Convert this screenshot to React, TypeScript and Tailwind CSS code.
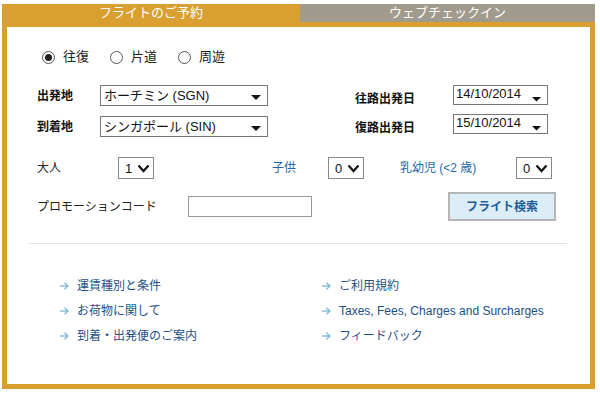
import React from 'react';

const font = { fontFamily: '"Liberation Sans", "Noto Sans CJK JP", sans-serif' };

function Radio({ checked, label }: { checked?: boolean; label: string }) {
  return (
    <label className="flex items-center gap-[8px]">
      <span className="w-[13px] h-[13px] rounded-full border border-[#555] bg-white flex items-center justify-center">
        {checked && <span className="w-[7px] h-[7px] rounded-full bg-[#222]" />}
      </span>
      <span className="text-[13px] text-[#222]">{label}</span>
    </label>
  );
}

function Triangle({ small }: { small?: boolean }) {
  return (
    <svg width={small ? 9 : 10} height="5" viewBox={small ? '0 0 9 5' : '0 0 10 5'} className="mt-[4px]">
      <polygon points={small ? '0,0 9,0 4.5,4.5' : '0,0 10,0 5,5'} fill="#111" />
    </svg>
  );
}

function Dropdown({ value, width }: { value: string; width: string }) {
  return (
    <div className={`${width} h-[21px] border border-[#777] bg-white flex items-center justify-between pl-[3px] pr-[6px]`}>
      <span className="text-[13px] text-[#111] leading-none">{value}</span>
      <Triangle />
    </div>
  );
}

function DateSelect({ value }: { value: string }) {
  return (
    <div className="w-[95px] h-[20px] border border-[#777] bg-white flex justify-between pl-[2px] pr-[6px]">
      <span className="text-[13px] text-[#111] leading-[16px]">{value}</span>
      <svg width="9" height="5" viewBox="0 0 9 5" className="mt-[11px]">
        <polygon points="0,0 9,0 4.5,4.5" fill="#111" />
      </svg>
    </div>
  );
}

function Chevron() {
  return (
    <svg width="13" height="9" viewBox="0 0 13 9">
      <polyline points="1.5,1.5 6.5,7 11.5,1.5" fill="none" stroke="#111" strokeWidth="2.2" />
    </svg>
  );
}

function NumSelect({ value }: { value: string }) {
  return (
    <div className="w-[36px] h-[22px] border border-[#888] bg-white flex items-center gap-[5px] pl-[6px]">
      <span className="text-[13px] text-[#111] leading-none">{value}</span>
      <Chevron />
    </div>
  );
}

function Arrow() {
  return (
    <svg width="9" height="8" viewBox="0 0 9 8" className="mr-[8px]">
      <line x1="0" y1="4" x2="8" y2="4" stroke="#7db3d6" strokeWidth="1.3" />
      <polyline points="4.5,0.8 8,4 4.5,7.2" fill="none" stroke="#7db3d6" strokeWidth="1.3" />
    </svg>
  );
}

function LinkItem({ text }: { text: string }) {
  return (
    <div className="flex items-center h-[25px]">
      <Arrow />
      <span className="text-[12px] text-[#1b4f86]">{text}</span>
    </div>
  );
}

export default function App() {
  return (
    <div className="w-[600px] h-[396px] bg-white pt-[4px] pl-[2px] pr-[5px]" style={font}>
      <div className="flex h-[18px]">
        <div className="w-[298px] bg-[#d99f30] text-white text-[13px] flex items-center justify-center">
          フライトのご予約
        </div>
        <div className="flex-1 bg-[#a19b8d] text-white text-[13px] flex items-center justify-center">
          ウェブチェックイン
        </div>
      </div>
      <div className="h-[367px] border-[5px] border-[#d99f30] bg-white pl-[30px] pr-[23px] pt-[23px]">
        <div className="flex items-center gap-[21px] pl-[5px] h-[14px]">
          <Radio checked label="往復" />
          <Radio label="片道" />
          <Radio label="周遊" />
        </div>

        <div className="flex mt-[21px]">
          <div className="flex flex-col gap-[10px]">
            <div className="flex items-center">
              <span className="w-[63px] text-[12px] font-bold text-[#111]">出発地</span>
              <Dropdown value="ホーチミン (SGN)" width="w-[168px]" />
            </div>
            <div className="flex items-center">
              <span className="w-[63px] text-[12px] font-bold text-[#111]">到着地</span>
              <Dropdown value="シンガポール (SIN)" width="w-[168px]" />
            </div>
          </div>
          <div className="flex flex-col gap-[9px] ml-[87px]">
            <div className="flex items-center h-[20px]">
              <span className="w-[98px] text-[12px] font-bold text-[#111] mt-[8px]">往路出発日</span>
              <DateSelect value="14/10/2014" />
            </div>
            <div className="flex items-center h-[20px]">
              <span className="w-[98px] text-[12px] font-bold text-[#111] mt-[8px]">復路出発日</span>
              <DateSelect value="15/10/2014" />
            </div>
          </div>
        </div>

        <div className="flex items-center mt-[20px] h-[22px]">
          <span className="w-[81px] text-[12px] text-[#222]">大人</span>
          <NumSelect value="1" />
          <span className="ml-[118px] w-[56px] text-[12px] text-[#1f69a8]">子供</span>
          <NumSelect value="0" />
          <span className="ml-[36px] w-[116px] text-[12px] text-[#1f69a8]">乳幼児 (&lt;2 歳)</span>
          <NumSelect value="0" />
        </div>

        <div className="flex items-center mt-[13px] h-[29px]">
          <span className="w-[151px] text-[12px] text-[#222]">プロモーションコード</span>
          <div className="w-[124px] h-[21px] border border-[#999] bg-white" />
          <button className="ml-[136px] w-[108px] h-[29px] border-2 border-[#b5b5b5] bg-[#dcedf8] text-[12px] font-bold text-[#1f5c99]">
            フライト検索
          </button>
        </div>

        <div className="mt-[22px] -ml-[9px] border-t border-[#e3e3e3]" />

        <div className="flex mt-[29px] pl-[23px]">
          <div className="w-[262px] flex flex-col">
            <LinkItem text="運賃種別と条件" />
            <LinkItem text="お荷物に関して" />
            <LinkItem text="到着・出発便のご案内" />
          </div>
          <div className="flex flex-col">
            <LinkItem text="ご利用規約" />
            <LinkItem text="Taxes, Fees, Charges and Surcharges" />
            <LinkItem text="フィードバック" />
          </div>
        </div>
      </div>
    </div>
  );
}
